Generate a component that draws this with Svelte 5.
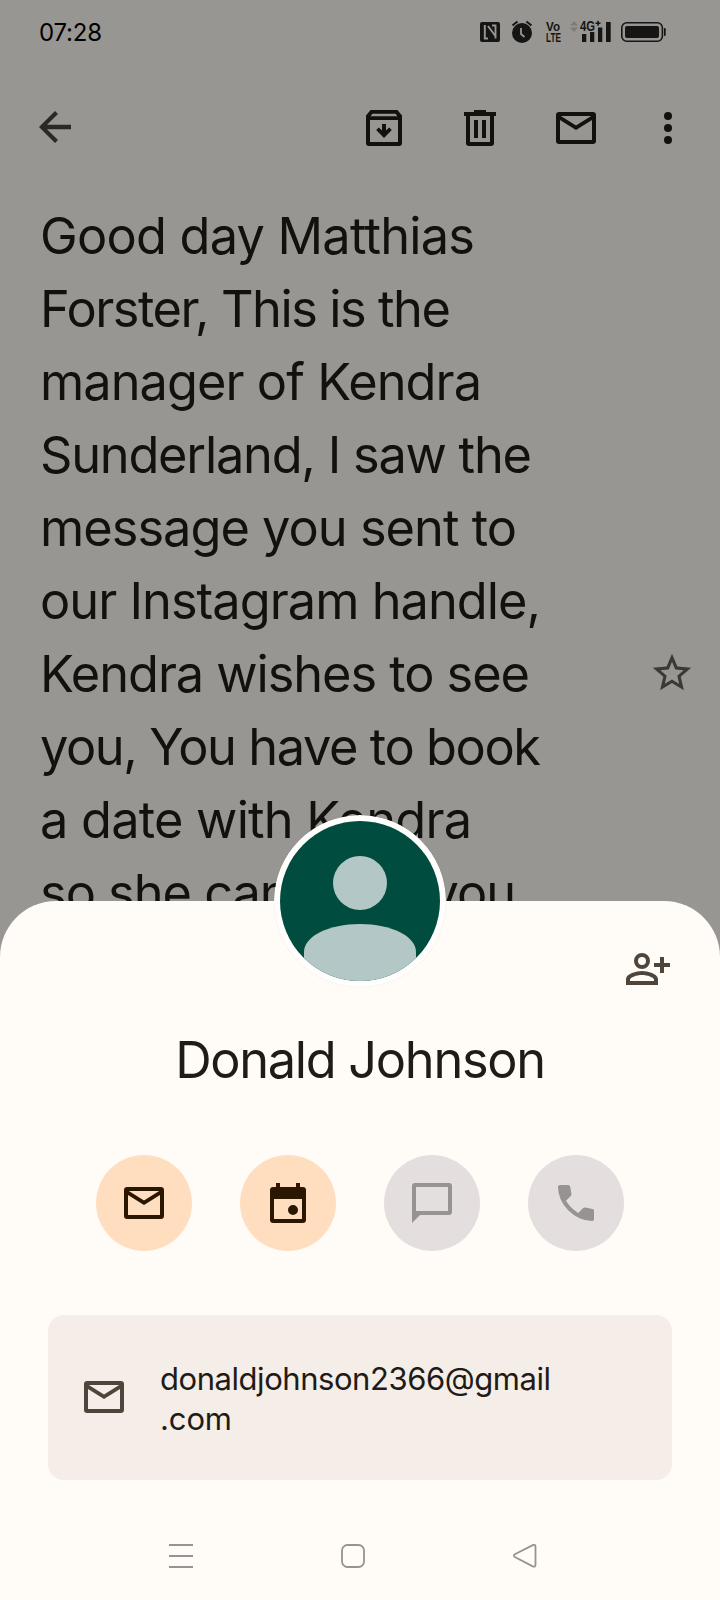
<script lang="ts">
  interface Line {
    text: string;
    width: number;
  }

  const subject: Line[] = [
    { text: 'Good day Matthias', width: 435 },
    { text: 'Forster, This is the', width: 411 },
    { text: 'manager of Kendra', width: 442 },
    { text: 'Sunderland, I saw the', width: 492 },
    { text: 'message you sent to', width: 477 },
    { text: 'our Instagram handle,', width: 501 },
    { text: 'Kendra wishes to see', width: 490 },
    { text: 'you, You have to book', width: 501 },
    { text: 'a date with Kendra', width: 432 },
    { text: 'so she can meet you', width: 476 }
  ];

  const email: Line[] = [
    { text: 'donaldjohnson2366@gmail', width: 391 },
    { text: '.com', width: 72 }
  ];

  const icons = {
    back: 'M20 10.900H8l5.500-5.400L12 4l-8 8 8 8 1.500-1.500L8 13.100H20z',
    archive:
      'M18.700 3H5.300L3 5.800V19.500Q3 21 4.500 21h15q1.500 0 1.500-1.500V5.800zM6.200 4.900h11.600l.9 1.200H5.300zM5 19V8h14v11zM11 10h2v3.200l1.600-1.500 1.300 1.300-3.900 4-3.900-4 1.300-1.300 1.600 1.500z',
    trash:
      'M9 3v1H4v2h1v13.500Q5 21 6.500 21h11q1.500 0 1.500-1.500V6h1V4h-5V3zM7 6h10v13H7zM9 8h2v9H9zM13 8h2v9h-2z',
    mail: 'M3.600 4Q2 4 2 5.600v12.800Q2 20 3.600 20h16.800q1.600 0 1.600-1.600V5.600Q22 4 20.400 4zM19.600 6 12 10.700 4.400 6zM4 18V8l8 5 8-5v10z',
    star: 'M22 9.240l-7.190-.62L12 2 9.190 8.630 2 9.240l5.460 4.730L5.820 21 12 17.270 18.180 21l-1.630-7.030zM12 15.400l-3.760 2.270 1-4.280-3.320-2.880 4.380-.38L12 6.100l1.710 4.040 4.380.38-3.320 2.880 1 4.280z',
    addPerson:
      'M9 4a4 4 0 1 0 0 8 4 4 0 1 0 0-8zM9 6a2 2 0 1 1 0 4 2 2 0 1 1 0-4zM9 13c-2.670 0-8 1.340-8 4v3h16v-3c0-2.660-5.330-4-8-4zM15 18H3v-.8C3.200 16.200 6.300 15 9 15s5.800 1.200 6 2.200zM18 6h2v3h3v2h-3v3h-2v-3h-3V9h3z',
    event:
      'M6 2v2H4.600Q3 4 3 5.600v14.800Q3 22 4.600 22h14.800q1.600 0 1.600-1.600V5.600Q21 4 19.400 4H18V2h-2v2H8V2zM5 10h14v10H5zM14.500 13a2.500 2.500 0 1 0 0 5 2.500 2.500 0 1 0 0-5z',
    chat: 'M3.600 2Q2 2 2 3.600V22l4-4h14.400q1.600 0 1.600-1.600V3.600Q22 2 20.400 2zM4 4h16v12H4z',
    call: 'M19.950 21q-3.125 0-6.175-1.362-3.050-1.363-5.550-3.863-2.500-2.500-3.862-5.550Q3 7.175 3 4.050q0-.45.3-.75t.75-.3H8.100q.35 0 .625.225t.325.575l.65 3.500q.05.35-.012.637-.063.288-.288.513L6.975 10.900q1.050 1.800 2.638 3.375Q11.200 15.850 13.100 17l2.350-2.350q.225-.225.588-.337.362-.113.712-.063l3.450.7q.35.075.575.338.225.262.225.612v4.050q0 .45-.3.75t-.75.3z'
  };

  const actions = [
    { label: 'Email', icon: icons.mail, enabled: true },
    { label: 'Schedule', icon: icons.event, enabled: true },
    { label: 'Chat', icon: icons.chat, enabled: false },
    { label: 'Call', icon: icons.call, enabled: false }
  ];

  // Track the text out or in so that it fills the given width.
  function fit(node: HTMLElement, width: number) {
    const natural = node.getBoundingClientRect().width;
    const gaps = (node.textContent ?? '').length - 1;
    node.style.letterSpacing = `${(width - natural) / gaps}px`;
  }
</script>

{#snippet icon(path: string, size = 48)}
  <svg class="icon" width={size} height={size} viewBox="0 0 24 24" fill="currentColor" fill-rule="evenodd">
    <path d={path} />
  </svg>
{/snippet}

<div class="screen">
  <header class="status">
    <span class="time"><span class="fit" use:fit={63}>07:28</span></span>
    <svg class="indicators" width="188" height="32" viewBox="0 -4 188 32" fill="#151513">
      <rect y="2" width="20" height="20" rx="2" />
      <path d="M8 18.500H4.800V5M8 6l7 9.500M12 5.500h3.500V18.500" fill="none" stroke="#989693" stroke-width="1.900" />
      <circle cx="42" cy="13" r="10" />
      <path d="M32.500 5.500l5-4M51.500 5.500l-5-4" stroke="#151513" stroke-width="2" />
      <path d="M41 8v6l3.500 3" fill="none" stroke="#989693" stroke-width="1.800" />
      <text x="66" y="10.500" font-size="12" textLength="14" lengthAdjust="spacingAndGlyphs">Vo</text>
      <text x="66" y="22" font-size="12" textLength="15" lengthAdjust="spacingAndGlyphs">LTE</text>
      <path d="M90 5.500l4-4.500 4 4.500zM90 7.500l4 4.500 4-4.500z" fill="#7d7b78" />
      <text x="100" y="11" font-size="14" textLength="15" lengthAdjust="spacingAndGlyphs">4G</text>
      <path d="M115.500 3.300h5M118 .8v5" stroke="#151513" stroke-width="1.500" />
      <path d="M102 14h4.300v8H102zM110 12h4.300v10H110zM118 7.500h4.300V22H118zM126 2h4.700v20H126z" />
      <rect x="141.800" y="2.800" width="40.600" height="18.400" rx="5" fill="none" stroke="#151513" stroke-width="1.600" />
      <rect x="145" y="6" width="34" height="12" rx="2" />
      <path d="M184 8h.5q1.200 0 1.200 1.200v5.600q0 1.200-1.200 1.200h-.5z" />
    </svg>
  </header>

  <nav class="toolbar">
    <span class="back">{@render icon(icons.back)}</span>
    <div class="tools">
      {@render icon(icons.archive)}
      {@render icon(icons.trash)}
      {@render icon(icons.mail)}
      <svg class="more" width="48" height="48" viewBox="0 0 24 24" fill="currentColor">
        <circle cx="12" cy="6" r="2" />
        <circle cx="12" cy="12" r="2" />
        <circle cx="12" cy="18" r="2" />
      </svg>
    </div>
  </nav>

  <main class="message">
    <h1 class="subject">
      {#each subject as line}
        <span class="line"><span class="fit" use:fit={line.width}>{line.text}</span></span>
      {/each}
    </h1>
    <span class="star">{@render icon(icons.star, 46)}</span>
  </main>

  <section class="sheet">
    <svg class="avatar" width="172" height="172" viewBox="0 0 172 172">
      <defs>
        <clipPath id="face"><circle cx="86" cy="86" r="80" /></clipPath>
      </defs>
      <circle cx="86" cy="86" r="86" fill="#fffefd" />
      <g clip-path="url(#face)">
        <rect width="172" height="172" fill="#004d3f" />
        <circle cx="86" cy="68" r="27" fill="#b3c8c6" />
        <path d="M30 137C30 121 55 109 86 109s56 12 56 28v35H30z" fill="#b3c8c6" />
      </g>
    </svg>

    <div class="add">{@render icon(icons.addPerson)}</div>

    <h2 class="name"><span class="fit" use:fit={371}>Donald Johnson</span></h2>

    <div class="actions">
      {#each actions as action}
        <button class="action" class:enabled={action.enabled} disabled={!action.enabled} aria-label={action.label}>
          {@render icon(action.icon)}
        </button>
      {/each}
    </div>

    <div class="card">
      {@render icon(icons.mail)}
      <div class="address">
        {#each email as line}
          <span class="line"><span class="fit" use:fit={line.width}>{line.text}</span></span>
        {/each}
      </div>
    </div>

    <footer class="system-nav">
      <svg width="24" height="24" viewBox="0 0 24 24">
        <path d="M0 1h24M0 12h24M0 23h24" />
      </svg>
      <svg width="24" height="24" viewBox="0 0 24 24">
        <rect x="1" y="1" width="22" height="22" rx="5.500" />
      </svg>
      <svg width="24" height="24" viewBox="0 0 24 24">
        <path d="M1.800 10.300 19.800 1.100Q22.500 0 22.500 3v17.500q0 3-2.700 1.900L1.800 13Q0 11.700 1.800 10.300z" />
      </svg>
    </footer>
  </section>
</div>

<style>
  :global(body) {
    margin: 0;
  }

  .screen {
    position: relative;
    width: 720px;
    height: 1600px;
    overflow: hidden;
    background: #989693;
    color: #12110e;
    font-family: Inter, Roboto, sans-serif;
  }

  svg {
    display: block;
    flex: none;
  }

  .fit {
    display: inline-block;
    white-space: nowrap;
  }

  .status {
    display: flex;
    align-items: center;
    justify-content: space-between;
    height: 64px;
    padding: 0 52px 0 39px;
  }

  .status text {
    font-family: 'Liberation Sans', sans-serif;
    font-weight: 700;
  }

  .time {
    padding-top: 2px;
    font-size: 24px;
    line-height: 32px;
    color: #000;
  }

  .toolbar {
    display: flex;
    align-items: flex-start;
    justify-content: space-between;
    height: 95px;
    box-sizing: border-box;
    padding: 40px 28px 0 30.5px;
  }

  .back {
    margin-top: -1px;
    color: #2b2924;
  }

  .tools {
    display: flex;
    gap: 48px;
  }

  .more {
    margin-left: -4px;
  }

  .message {
    display: flex;
    justify-content: space-between;
    padding: 40px 25px 0 40px;
  }

  .subject {
    margin: 0;
    font-size: 50.5px;
    font-weight: 400;
    line-height: 73px;
  }

  .line {
    display: block;
  }

  .star {
    padding-top: 451px;
    color: #3b3935;
  }

  .sheet {
    position: absolute;
    inset: 901px 0 0;
    display: flex;
    flex-direction: column;
    border-radius: 56px 56px 0 0;
    background: #fffcf7;
    color: #1f1b16;
  }

  .avatar {
    position: absolute;
    top: -86px;
    left: 274px;
    border-radius: 50%;
    box-shadow: 0 0 1px rgb(120 100 90 / 25%);
  }

  .add {
    display: flex;
    justify-content: flex-end;
    height: 85px;
    padding: 44px 48px 0;
    color: #4f453b;
  }

  .name {
    margin: 0;
    text-align: center;
    font-size: 50.5px;
    font-weight: 400;
    line-height: 60px;
  }

  .actions {
    display: flex;
    justify-content: center;
    gap: 48px;
    margin-top: 65px;
  }

  .action {
    display: grid;
    place-items: center;
    width: 96px;
    height: 96px;
    padding: 0;
    border: none;
    border-radius: 50%;
    background: #e4dfde;
    color: #969390;
  }

  .enabled {
    background: #ffddbf;
    color: #2b1700;
  }

  .card {
    display: flex;
    align-items: center;
    gap: 32px;
    height: 165px;
    box-sizing: border-box;
    margin: 64px 48px 0;
    padding: 0 32px 1px;
    border-radius: 16px;
    background: #f4ede8;
  }

  .card .icon {
    color: #4f453b;
  }

  .address {
    padding-top: 4px;
    font-size: 31px;
    line-height: 40px;
  }

  .system-nav {
    display: flex;
    gap: 148px;
    margin-top: 64px;
    padding-left: 169px;
    fill: none;
    stroke: #969390;
    stroke-width: 1.8;
  }
</style>
